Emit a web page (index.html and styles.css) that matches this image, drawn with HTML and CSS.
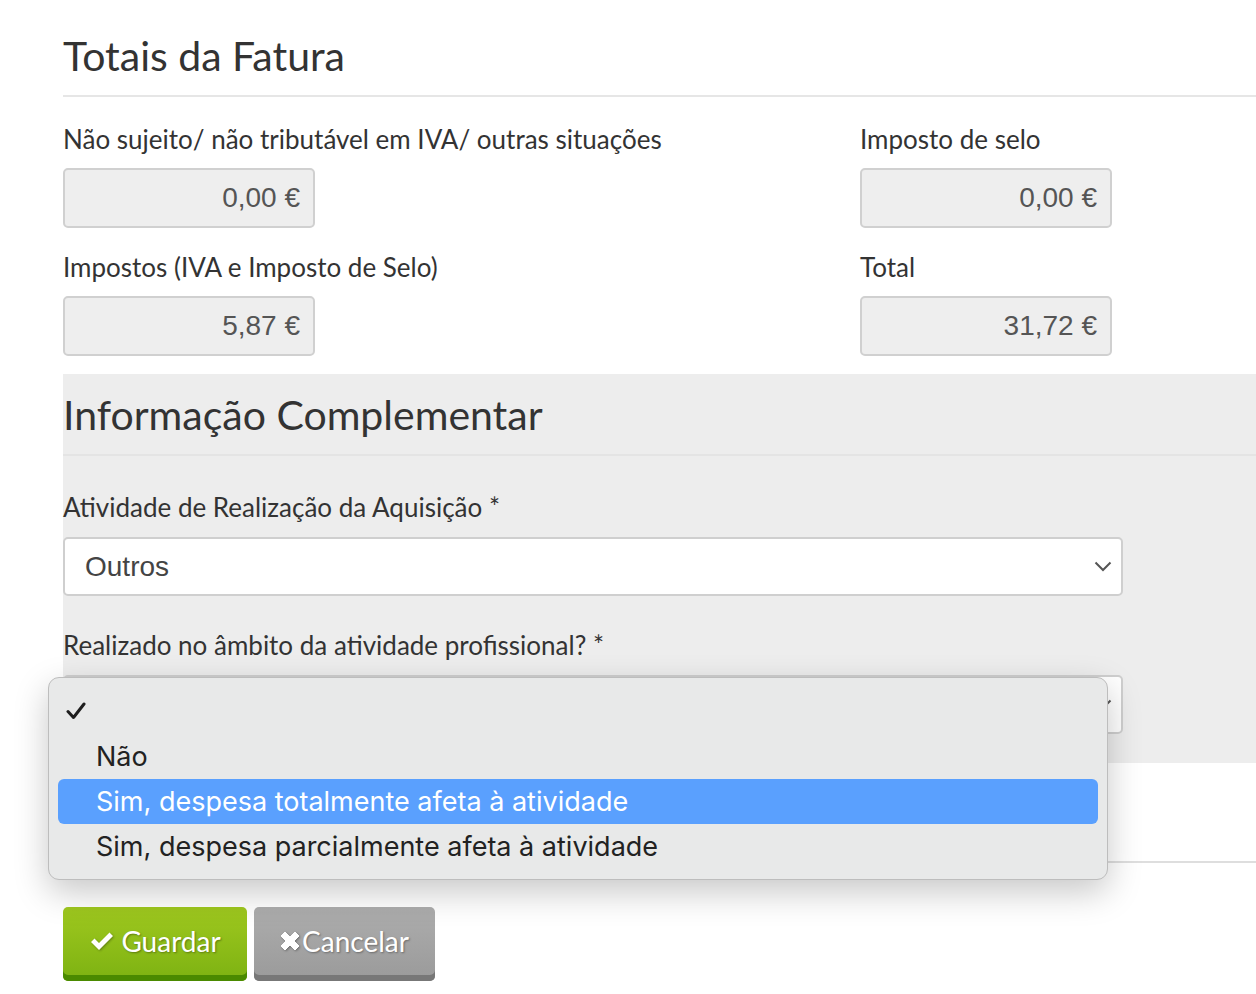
FILE: index.html
```html
<!DOCTYPE html>
<html lang="pt">
<head>
    <meta charset="UTF-8">
    <meta name="viewport" content="width=device-width, initial-scale=1.0">
    <title>Fatura</title>
    <link rel="stylesheet" href="styles.css">
</head>
<body>

    <div class="page">

        <!-- Totais -->
        <div class="section">
            <h2 class="section-title">Totais da Fatura</h2>

            <div class="totals-grid">
                <div class="field">
                    <label>Não sujeito/ não tributável em IVA/ outras situações</label>
                    <div class="readonly-input">0,00 €</div>
                </div>
                <div class="field">
                    <label>Imposto de selo</label>
                    <div class="readonly-input">0,00 €</div>
                </div>
                <div class="field">
                    <label>Impostos (IVA e Imposto de Selo)</label>
                    <div class="readonly-input">5,87 €</div>
                </div>
                <div class="field">
                    <label>Total</label>
                    <div class="readonly-input">31,72 €</div>
                </div>
            </div>
        </div>

        <!-- Informação complementar -->
        <div class="section section-grey">
            <h2 class="section-title">Informação Complementar</h2>

            <div class="field field-wide">
                <label>Atividade de Realização da Aquisição *</label>
                <div class="select-box">
                    <span>Outros</span>
                    <svg class="chevron" width="18" height="11" viewBox="0 0 18 11"><polyline points="1.5,1.5 9,9 16.5,1.5" fill="none" stroke="#555" stroke-width="2"/></svg>
                </div>
            </div>

            <div class="field field-wide">
                <label>Realizado no âmbito da atividade profissional? *</label>
                <div class="select-box">
                    <span></span>
                    <svg class="chevron" width="18" height="11" viewBox="0 0 18 11"><polyline points="1.5,1.5 9,9 16.5,1.5" fill="none" stroke="#555" stroke-width="2"/></svg>
                </div>
            </div>

            <!-- open select menu -->
            <ul class="select-menu">
                <li class="checked">
                    <svg class="tick" width="20" height="18" viewBox="0 0 20 18"><polyline points="2,9.5 7.5,15.5 18,2" fill="none" stroke="#1e1e1e" stroke-width="3" stroke-linecap="round" stroke-linejoin="round"/></svg>
                </li>
                <li>Não</li>
                <li class="active">Sim, despesa totalmente afeta à atividade</li>
                <li>Sim, despesa parcialmente afeta à atividade</li>
            </ul>
        </div>

        <div class="section section-blank"></div>

        <div class="actions">
            <button class="btn btn-save">
                <svg width="26" height="22" viewBox="0 0 26 22"><path d="M2 12 L5.5 8.5 L10 13 L20.5 2.5 L24 6 L10 20 Z" fill="#fff"/></svg>
                Guardar
            </button>
            <button class="btn btn-cancel">
                <svg width="20" height="20" viewBox="0 0 20 20"><path d="M1 5 L5 1 L10 6 L15 1 L19 5 L14 10 L19 15 L15 19 L10 14 L5 19 L1 15 L6 10 Z" fill="#fff" stroke="#fff" stroke-width="1" stroke-linejoin="round"/></svg>Cancelar
            </button>
        </div>

    </div>

</body>
</html>
```

FILE: styles.css
```css
body {
    font-family: 'Lato', sans-serif;
    margin: 0;
    padding: 0;
    background: #fff;
    color: #333;
}

.page {
    margin-left: 63px;
}

.section {
    position: relative;
}

.section-title {
    font-size: 41px;
    font-weight: 400;
    line-height: 48px;
    margin: 0;
    padding: 32px 0 15px;
    border-bottom: 2px solid #e6e6e6;
    color: #333;
}

.totals-grid {
    display: grid;
    grid-template-columns: 797px 252px;
    row-gap: 24px;
    padding: 27px 0 18px;
}

.field label {
    display: block;
    font-size: 26px;
    line-height: 30px;
    color: #333;
    margin-bottom: 14px;
}

.readonly-input {
    box-sizing: border-box;
    width: 252px;
    height: 60px;
    padding: 0 13px;
    background: #eee;
    border: 2px solid #d0d0d0;
    border-radius: 5px;
    font-family: 'Liberation Sans', Arial, sans-serif;
    font-size: 28px;
    color: #555;
    display: flex;
    align-items: center;
    justify-content: flex-end;
}

.section-grey {
    background: #ededed;
    padding-bottom: 29px;
}

.section-grey .section-title {
    padding-top: 17px;
    padding-bottom: 15px;
    border-bottom-color: #e4e4e4;
}

.field-wide {
    margin-top: 36px;
}

.field-wide + .field-wide {
    margin-top: 34px;
}

.field-wide label {
    margin-bottom: 15px;
}

.select-box {
    box-sizing: border-box;
    width: 1060px;
    height: 59px;
    padding: 0 20px;
    background: #fff;
    border: 2px solid #cfcfcf;
    border-radius: 5px;
    font-family: 'Liberation Sans', Arial, sans-serif;
    font-size: 28px;
    color: #444;
    display: flex;
    align-items: center;
    justify-content: space-between;
}

.chevron {
    margin-right: -11px;
}

.select-menu {
    position: absolute;
    left: -15px;
    top: 303px;
    width: 1060px;
    height: 203px;
    box-sizing: border-box;
    margin: 0;
    padding: 11px 9px;
    list-style: none;
    background: #e8e9e9;
    border: 1px solid #bdbdbd;
    border-radius: 11px;
    box-shadow: 0 12px 34px rgba(0, 0, 0, 0.22);
    font-family: 'Inter', 'Liberation Sans', sans-serif;
    font-size: 27px;
    color: #222;
    z-index: 10;
}

.select-menu li {
    height: 45px;
    line-height: 45px;
    padding-left: 38px;
    border-radius: 6px;
    position: relative;
}

.select-menu li.active {
    background: #5aa0fe;
    color: #fff;
}

.select-menu .tick {
    position: absolute;
    left: 8px;
    top: 13px;
}

.section-blank {
    height: 98px;
    border-bottom: 2px solid #dedede;
}

.actions {
    display: flex;
    gap: 7px;
    margin-top: 44px;
}

.btn {
    font-family: 'Lato', sans-serif;
    font-size: 28px;
    color: #fff;
    height: 74px;
    border: none;
    border-radius: 5px;
    padding: 0 0 6px;
    display: flex;
    align-items: center;
    justify-content: center;
    gap: 6px;
    text-shadow: 1px 1px 2px rgba(0, 0, 0, 0.35);
    cursor: pointer;
}

.btn svg {
    filter: drop-shadow(1px 1px 1px rgba(0, 0, 0, 0.3));
}

.btn-save {
    width: 184px;
    background: linear-gradient(#9fc81f, #7db212);
    box-shadow: inset 0 -6px 0 #4a8a00;
}

.btn-cancel {
    width: 181px;
    gap: 2px;
    background: linear-gradient(#adadad, #9a9a9a);
    box-shadow: inset 0 -6px 0 #777;
}
```
